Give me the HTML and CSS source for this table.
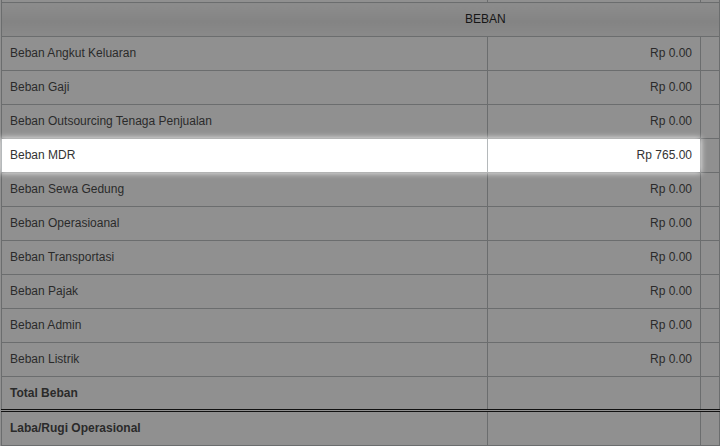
FILE: index.html
```html
<!DOCTYPE html>
<html lang="id">
<head>
    <meta charset="UTF-8">
    <meta name="viewport" content="width=device-width, initial-scale=1.0">
    <title>Laporan Laba Rugi</title>
    <link rel="stylesheet" href="styles.css">
</head>
<body>

    <div class="report">
        <table class="ledger">
            <colgroup>
                <col class="col-name">
                <col class="col-amount">
                <col class="col-extra">
            </colgroup>
            <tbody>
                <!-- bottom edge of the row above, scrolled out of view -->
                <tr class="prev-row">
                    <td></td>
                    <td></td>
                    <td></td>
                </tr>
                <tr class="section-head">
                    <th colspan="3">BEBAN</th>
                </tr>
                <tr><td>Beban Angkut Keluaran</td><td class="amount">Rp 0.00</td><td></td></tr>
                <tr><td>Beban Gaji</td><td class="amount">Rp 0.00</td><td></td></tr>
                <tr><td>Beban Outsourcing Tenaga Penjualan</td><td class="amount">Rp 0.00</td><td></td></tr>
                <tr><td>Beban MDR</td><td class="amount">Rp 765.00</td><td></td></tr>
                <tr><td>Beban Sewa Gedung</td><td class="amount">Rp 0.00</td><td></td></tr>
                <tr><td>Beban Operasioanal</td><td class="amount">Rp 0.00</td><td></td></tr>
                <tr><td>Beban Transportasi</td><td class="amount">Rp 0.00</td><td></td></tr>
                <tr><td>Beban Pajak</td><td class="amount">Rp 0.00</td><td></td></tr>
                <tr><td>Beban Admin</td><td class="amount">Rp 0.00</td><td></td></tr>
                <tr><td>Beban Listrik</td><td class="amount">Rp 0.00</td><td></td></tr>
                <tr class="total-row"><td>Total Beban</td><td></td><td></td></tr>
                <tr class="grand-row"><td>Laba/Rugi Operasional</td><td></td><td></td></tr>
            </tbody>
        </table>

        <!-- tour highlight over the "Beban MDR" row -->
        <div class="tour-helper"></div>
    </div>

</body>
</html>
```

FILE: styles.css
```css
body {
    margin: 0;
    font-family: "Liberation Sans", Arial, sans-serif;
    font-size: 12px;
    color: #333;
    background-color: #fff;
}
.report {
    position: relative;
    height: 446px;
    overflow: hidden;
    padding-left: 1px;
}
.ledger {
    width: 719px;
    border-collapse: collapse;
    margin-top: -32px;
    table-layout: fixed;
}
.col-name {
    width: 486px;
}
.col-amount {
    width: 213px;
}
.ledger td, .ledger th {
    border: 1px solid #b5b9bb;
    padding: 0 8px;
    height: 33px;
    line-height: 15px;
    text-align: left;
    font-weight: normal;
}
.ledger .amount {
    text-align: right;
}
.section-head th {
    padding-left: 463px;
    color: #0a0a0a;
    background: linear-gradient(#f7f7f7, #e6e6e6 55%, #f2f2f2);
}
.total-row td {
    font-weight: bold;
    height: 32px;
}
.grand-row td {
    font-weight: bold;
    border-top: 3px double #000;
}
.tour-helper {
    position: absolute;
    top: 139px;
    left: 1px;
    width: 699px;
    height: 33px;
    box-shadow: 0 0 6px 1px rgba(255, 255, 255, 0.85), 0 0 0 5000px rgba(33, 33, 33, 0.5);
}
```
